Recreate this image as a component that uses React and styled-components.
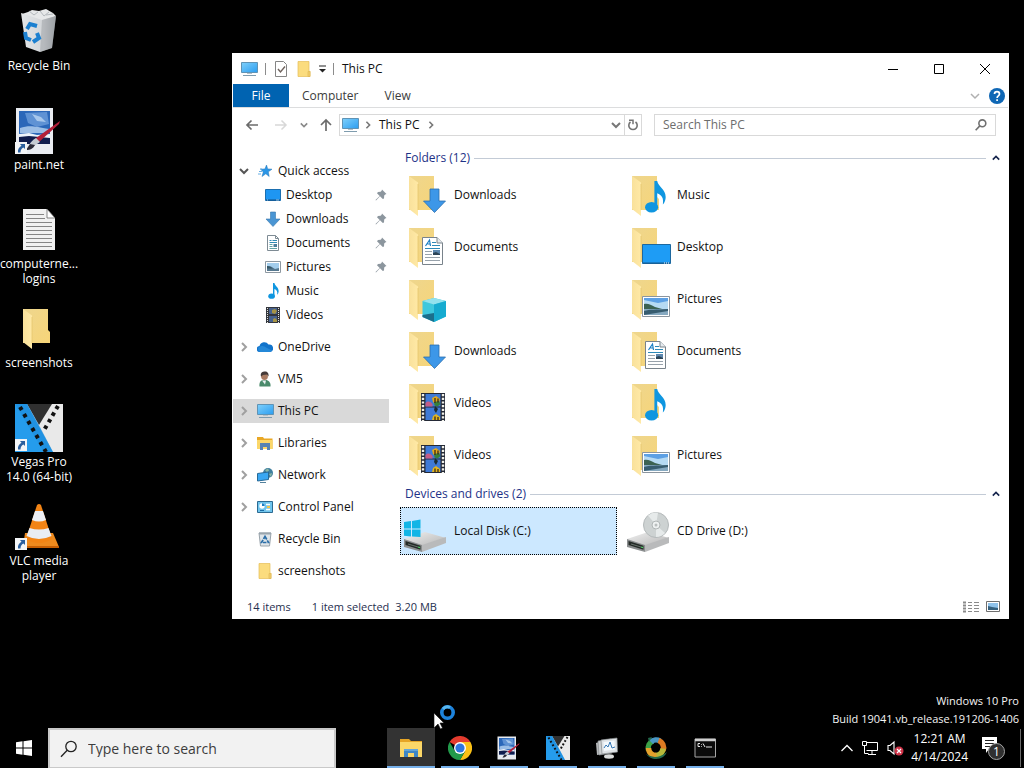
import React from "react";
import styled, { createGlobalStyle } from "styled-components";

const GlobalStyle = createGlobalStyle`
  * { box-sizing: border-box; }
  body {
    margin: 0;
    background: #000;
    font-family: "Open Sans", "Noto Sans", sans-serif;
    font-size: 12px;
    line-height: 16px;
    color: #111;
  }
  button, input { font: inherit; color: inherit; border: 0; padding: 0; margin: 0; background: none; }
  svg { display: block; flex: none; }
`;

/* ---------- desktop ---------- */

const Screen = styled.div`
  position: relative;
  min-height: 100vh;
  display: flex;
  flex-direction: column;
  overflow: hidden;
`;

const DesktopArea = styled.main`
  flex: 1;
  display: flex;
  align-items: flex-start;
`;

const Shortcuts = styled.nav`
  width: 78px;
  flex: none;
  display: flex;
  flex-direction: column;
`;

const Shortcut = styled.button`
  height: 99px;
  padding-top: 8px;
  display: flex;
  flex-direction: column;
  align-items: center;
  gap: 2px;
  color: #fff;
  line-height: 15px;
  text-align: center;
`;

const ShortcutLabel = styled.span`
  white-space: pre-line;
`;

const Watermark = styled.div`
  padding: 0 5px 0 0;
  font-size: 11px;
  line-height: 18px;
  color: #f4f4f4;
  text-align: right;
`;

const Pointer = styled.svg`
  position: absolute;
  left: 42.3%;
  bottom: 36px;
`;

/* ---------- window ---------- */

const Window = styled.section`
  flex: 1;
  min-width: 0;
  margin: 53px 15px 0 154px;
  padding: 0 1px;
  background: #fff;
`;

const TitleBar = styled.header`
  height: 31px;
  display: flex;
  align-items: center;
  padding-left: 8px;
`;

const QuickTools = styled.div`
  display: flex;
  align-items: center;
  gap: 7px;
`;

const Separator = styled.span`
  width: 1px;
  height: 12px;
  background: #8c8c8c;
`;

const Title = styled.h1`
  flex: 1;
  margin: 0 0 0 8px;
  font-size: 12px;
  font-weight: 400;
`;

const CaptionButton = styled.button`
  width: 46px;
  height: 31px;
  display: grid;
  place-items: center;
`;

const Ribbon = styled.div`
  height: 24px;
  display: flex;
  align-items: center;
  border-bottom: 1px solid #dcddde;
`;

const Tab = styled.button`
  height: 23px;
  padding: 0 13px;
  color: #3c3c3c;
`;

const FileTab = styled(Tab)`
  width: 56px;
  background: #0063b1;
  color: #fff;
`;

const RibbonEnd = styled.div`
  margin-left: auto;
  padding-right: 3px;
  display: flex;
  align-items: center;
  gap: 9px;
`;

const NavBar = styled.div`
  height: 34px;
  display: flex;
  align-items: center;
  padding: 0 12px 0 11px;
`;

const NavButtons = styled.div`
  display: flex;
  align-items: center;
  gap: 12px;
  padding-right: 7px;
`;

const IconButton = styled.button`
  display: grid;
  place-items: center;
`;

const AddressBar = styled.div`
  flex: 299 1 0;
  height: 22px;
  display: flex;
  align-items: center;
  gap: 5px;
  padding-left: 2px;
  border: 1px solid #d9d9d9;
`;

const Crumb = styled.button`
  padding: 0 2px;
`;

const AddressEnd = styled.div`
  height: 20px;
  margin-left: auto;
  display: flex;
  align-items: center;
`;

const Refresh = styled(IconButton)`
  width: 17px;
  height: 20px;
  margin-left: 3px;
  border-left: 1px solid #d9d9d9;
`;

const SearchBox = styled.label`
  flex: 324 1 0;
  height: 22px;
  margin-left: 12px;
  padding: 0 8px;
  display: flex;
  align-items: center;
  border: 1px solid #d9d9d9;
  input { flex: 1; min-width: 0; outline: 0; }
  input::placeholder { color: #6d6d6d; opacity: 1; }
`;

const Body = styled.div`
  display: flex;
  align-items: flex-start;
  padding-bottom: 12px;
`;

/* ---------- navigation tree ---------- */

const Tree = styled.nav`
  width: 156px;
  flex: none;
  padding-top: 17px;
  display: flex;
  flex-direction: column;
  gap: 8px;
`;

const TreeRow = styled.button`
  width: 100%;
  height: 24px;
  display: flex;
  align-items: center;
  padding: 0 2px 0 ${(p) => (p.$child ? 32 : 6)}px;
  background: ${(p) => (p.$selected ? "#d9d9d9" : "transparent")};
`;

const Twisty = styled.span`
  width: 18px;
`;

const TreeLabel = styled.span`
  flex: 1;
  margin-left: 5px;
  text-align: left;
`;

/* ---------- content ---------- */

const Content = styled.div`
  flex: 1;
  min-width: 0;
  padding: 6px 8px 0 11px;
  display: flex;
  flex-direction: column;
  gap: 5px;
`;

const GroupHead = styled.h2`
  height: 20px;
  margin: 0 0 3px;
  padding-left: 5px;
  display: flex;
  align-items: center;
  gap: 4px;
  font-size: 12px;
  font-weight: 400;
  color: #1e3287;
`;

const Rule = styled.span`
  flex: 1;
  height: 1px;
  margin-right: 2px;
  background: #c3cbd6;
`;

const Tiles = styled.div`
  display: grid;
  grid-template-columns: repeat(auto-fill, 217px);
  gap: 4px 6px;
`;

const Tile = styled.button`
  height: 48px;
  display: flex;
  align-items: center;
  gap: 5px;
  text-align: left;
  border: 1px ${(p) => (p.$selected ? "dotted #000" : "solid transparent")};
  background: ${(p) => (p.$selected ? "#cce8ff" : "transparent")};
  svg { margin-top: 2px; }
`;

const StatusBar = styled.footer`
  height: 24px;
  display: flex;
  align-items: center;
  padding: 0 8px 0 14px;
  font-size: 11px;
  color: #1f2f4f;
`;

const StatusText = styled.span`
  margin-right: ${(p) => p.$gap}px;
`;

const ViewSwitch = styled.div`
  margin-left: auto;
  display: flex;
  gap: 7px;
`;

/* ---------- taskbar ---------- */

const Taskbar = styled.footer`
  height: 40px;
  display: flex;
  align-items: stretch;
  color: #fff;
`;

const StartButton = styled(IconButton)`
  width: 48px;
`;

const TaskSearch = styled.label`
  width: 288px;
  padding: 0 10px;
  display: flex;
  align-items: center;
  gap: 10px;
  border: 2px solid #c9c9c9;
  border-bottom-width: 1px;
  background: #f2f2f2;
  color: #333;
  font-size: 14px;
  input { flex: 1; min-width: 0; outline: 0; }
  input::placeholder { color: #3d3d3d; opacity: 1; }
`;

const Apps = styled.div`
  margin-left: 51px;
  display: flex;
  gap: 1px;
`;

const AppButton = styled.button`
  width: 48px;
  display: flex;
  flex-direction: column;
  align-items: center;
  justify-content: space-between;
  padding-top: 8px;
  background: ${(p) => (p.$active ? "#333" : "transparent")};
`;

const Underline = styled.span`
  width: ${(p) => (p.$active ? 48 : 38)}px;
  height: 2px;
  background: #76b0ea;
`;

const Tray = styled.div`
  margin-left: auto;
  display: flex;
  align-items: center;
`;

const TrayIcons = styled.div`
  display: flex;
  align-items: center;
  gap: 8px;
`;

const Clock = styled.time`
  margin: 0 13px 0 7px;
  line-height: 18px;
  text-align: center;
`;

const ShowDesktop = styled.button`
  width: 4px;
  height: 38px;
  margin-left: 15px;
  border-left: 1px solid #6a6a6a;
`;

/* ---------- glyphs ---------- */

const Chevron = ({ dir = "right", color = "#888", size = 10, w = 1.5 }) => {
  const d = {
    right: "M3 1l4 4-4 4",
    down: "M1 3l4 4 4-4",
    up: "M1 7l4-4 4 4",
  }[dir];
  return (
    <svg width={size} height={size} viewBox="0 0 10 10">
      <path d={d} fill="none" stroke={color} strokeWidth={w} />
    </svg>
  );
};

const MonitorIcon = () => (
  <svg width="17" height="16" viewBox="0 0 17 16">
    <defs>
      <linearGradient id="scr" x1="0" y1="0" x2="1" y2="1">
        <stop offset="0" stopColor="#7fd0fb" />
        <stop offset="1" stopColor="#2b9df0" />
      </linearGradient>
    </defs>
    <path d="M.5 1.500h16v10H.5z" fill="url(#scr)" stroke="#5f93b5" />
    <path d="M6 12h5v1H6z" fill="#b4c0c8" />
    <path d="M2 14.500h13" stroke="#7f9cae" />
  </svg>
);

const StarIcon = () => (
  <svg width="16" height="16" viewBox="0 0 16 16">
    <path d="M9.500 2l1.200 3.900 4.300.3-3.700 2.600.9 4.700-3.400-2.700-3.800 2.700 1.300-4.600L3.500 6.200l4.400-.3z" fill="#2b96e6" stroke="#2074b8" strokeWidth=".5" />
    <path d="M2 8.500h3M1 11h3M3 6h2" stroke="#67aee4" />
  </svg>
);

const DesktopIcon = ({ w = 16, h = 16 }) => (
  <svg width={w} height={h} viewBox="0 0 16 16">
    <path d="M.5 2.500h15v11H.5z" fill="#1e96f2" stroke="#1b6fb0" />
    <path d="M1 13h14" stroke="#0e4f85" />
    <path d="M2 13h1M11 13h3" stroke="#d6ecff" strokeWidth=".7" />
  </svg>
);

const DownIcon = ({ w = 16, h = 16 }) => (
  <svg width={w} height={h} viewBox="0 0 16 16">
    <path d="M5.500 1h5v7h4.500L8 15.500 1 8h4.500z" fill="#4a95d3" stroke="#3577ad" strokeWidth=".6" />
  </svg>
);

const DocShape = () => (
  <g>
    <path d="M.5.5H15l5.500 5.500v21.500H.5z" fill="#fff" stroke="#79838b" />
    <path d="M15 .5V6h5.500" fill="#e6ebef" stroke="#79838b" />
    <path d="M3.500 9l4-6 1 6M5.500 7h3" fill="none" stroke="#1b7fc4" strokeWidth="1.200" />
    <path d="M10 5.500h4M10 8.500h8M3 11.500h15" stroke="#2d89b8" />
    <path d="M3 14.500h7M3 17.500h7M3 20.500h15M3 23.500h15" stroke="#98a2ab" />
    <path d="M11 13h7v5h-7z" fill="#5c86ad" />
    <path d="M11 18v-2l3-1 4 2v1z" fill="#2c4456" />
  </g>
);

const DocIcon = () => (
  <svg width="16" height="16" viewBox="0 0 16 16">
    <path d="M2.500.5h8l3 3v12h-11z" fill="#fff" stroke="#7e8b94" />
    <path d="M10.500.5v3h3" fill="none" stroke="#7e8b94" />
    <path d="M4.500 5.500h2M7.500 5.500h4.500M4.500 7.500h7.500" stroke="#2f8bb5" />
    <path d="M4.500 9.500h3M4.500 11.500h3M4.500 13.500h7.500" stroke="#5fa3a6" />
    <path d="M8.500 9h3.500v3H8.500z" fill="#4c7f9c" />
  </svg>
);

const PictureShape = () => (
  <g>
    <path d="M.5.5h27v20H.5z" fill="#fff" stroke="#8b959e" />
    <path d="M2 2h24v17H2z" fill="#b6daf3" />
    <path d="M2 2h24v3l-10 2L2 4z" fill="#5da0e4" />
    <path d="M2 8c4-1 7 1 11 3l9 2.500H2z" fill="#3c6252" />
    <path d="M2 13h24v6H2z" fill="#86a9c0" />
    <path d="M2 15c6-2 11-1 24-2v2L2 19z" fill="#385d70" />
  </g>
);

const PictureIcon = () => (
  <svg width="16" height="14" viewBox="0 0 16 14">
    <path d="M.5 1.500h15v11H.5z" fill="#fff" stroke="#8d98a1" />
    <path d="M2 3h12v8H2z" fill="#a3cdec" />
    <path d="M2 6l4 .5 4 2.500 4-1v3H2z" fill="#56788f" />
    <path d="M2 6l3 .5 3 2H2z" fill="#365868" />
  </svg>
);

const NoteShape = () => (
  <g fill="#0f96e0">
    <ellipse cx="7" cy="29" rx="7" ry="5.500" />
    <path d="M10 1h3c1 6 9 9 9 17 0 3-1 6-3 8 1-7-1-10-6-12v15h-3z" />
  </g>
);

const NoteIcon = () => (
  <svg width="16" height="18" viewBox="-7 0 34 36">
    <NoteShape />
  </svg>
);

const FilmShape = () => (
  <g>
    <path d="M0 0h24v28H0z" fill="#242936" />
    <path d="M2 1v27M22 1v27" stroke="#f1f1ea" strokeWidth="2.400" strokeDasharray="2.200 1.500" />
    <path d="M4.500 1h15v12.500h-15zM4.500 14.500h15V27h-15z" fill="#3f7ad6" />
    <path d="M4.500 10c3-3 5-1 7 1v2.500h-7z" fill="#c45d87" />
    <path d="M11 5l4-2 4 3-1 4-3 2-3-3z" fill="#e2a91c" />
    <path d="M13 9l5-1 1.500 3-3 2.500-3-1z" fill="#37803a" />
    <path d="M14 13l3 3-2 4-2-3z" fill="#1c2c32" />
    <path d="M11 27l1-4 3-2 4 3v3z" fill="#e2b51e" />
    <path d="M14 5v5M17 5.500v4M14 23.500v3.500M17 24v3" stroke="#3a2a18" strokeWidth="1.300" />
  </g>
);

const FilmIcon = () => (
  <svg width="14" height="16" viewBox="0 0 14 16">
    <path d="M0 0h14v16H0z" fill="#33363d" />
    <path d="M1.500 1v15M12.500 1v15" stroke="#e4e4dc" strokeDasharray="1 1" />
    <path d="M3 1h8v6H3zM3 9h8v6H3z" fill="#47628f" />
    <path d="M6 3l3-1 2 2-2 3-3-1z" fill="#a79443" />
    <path d="M7 12l2-1 2 2v2H7z" fill="#a79443" />
  </svg>
);

const CloudIcon = () => (
  <svg width="16" height="16" viewBox="0 0 16 16">
    <path d="M3 13a3 3 0 0 1-.5-6A5 5 0 0 1 11.500 5.500 3.700 3.700 0 0 1 13 13z" fill="#1173cb" />
    <path d="M2 8c3-2 5-1 8 1l5 2.500A3 3 0 0 1 13 13H3a3 3 0 0 1-1-5z" fill="#2488d8" />
  </svg>
);

const UserIcon = () => (
  <svg width="16" height="16" viewBox="0 0 16 16">
    <path d="M2.500 15.500c-.5-4 1-6.500 4-6.500h2c3 0 5.500 2.500 5 6.500z" fill="#4a8a6b" />
    <path d="M5 9.500l3 4 1-4z" fill="#e9eef0" />
    <circle cx="7.500" cy="5.500" r="3.400" fill="#a97b62" />
    <path d="M4 5.500C3 1.500 5.500.5 8 .5s4 2 3.500 5L10 3.500 6 4z" fill="#443a38" />
  </svg>
);

const LibraryIcon = () => (
  <svg width="16" height="16" viewBox="0 0 16 16">
    <path d="M0 2h6l1 1.500h8.500V14H0z" fill="#e9a825" />
    <path d="M0 5h15.500v9H0z" fill="#fbd769" />
    <path d="M3 8h10v7h-3v-3H6v3H3z" fill="#5583b4" />
  </svg>
);

const NetworkIcon = () => (
  <svg width="16" height="16" viewBox="0 0 16 16">
    <circle cx="11" cy="6" r="5" fill="#3f7f9f" />
    <path d="M8 3l3-1.500 1 2-2 2zM12 7l3-1-1 4z" fill="#8cb7a6" />
    <path d="M.5 6.500l11-1.500v7.500l-11 1.500z" fill="#39a7f2" stroke="#276a97" />
    <path d="M3 15.500h6" stroke="#54819c" />
  </svg>
);

const ControlIcon = () => (
  <svg width="16" height="16" viewBox="0 0 16 16">
    <path d="M.5 2.500h15v11H.5z" fill="#6fc5ee" stroke="#2c6b92" />
    <circle cx="5" cy="7" r="2.700" fill="#fff" />
    <path d="M5 7V4.300A2.700 2.700 0 0 1 7.700 7z" fill="#1b7fc4" />
    <path d="M9 5.500h4M9 10.500h4" stroke="#fff" strokeWidth="1.500" />
    <path d="M10 7h3v2h-3z" fill="#f0c64a" />
    <path d="M3 11.500h4" stroke="#186ba5" />
  </svg>
);

const MiniBin = () => (
  <svg width="16" height="16" viewBox="0 0 16 16">
    <path d="M2 2h12l-1.500 13h-9z" fill="#dfe5e9" stroke="#98a2aa" />
    <path d="M2 2.500h12" stroke="#9aa5ad" strokeWidth="2" />
    <path d="M8 5.500l3.500 6h-7z" fill="none" stroke="#2b6ea8" strokeWidth="1.700" strokeDasharray="3.500 1" />
  </svg>
);

const MiniFolder = () => (
  <svg width="16" height="16" viewBox="0 0 16 16">
    <path d="M2 .5h11v9l1 1v5H2z" fill="#fbdc7e" stroke="#e5bd57" strokeWidth=".7" />
    <path d="M12 10.500h2v5h-2z" fill="#f3cf6c" stroke="#dfb756" strokeWidth=".7" />
  </svg>
);

const PinIcon = () => (
  <svg width="12" height="12" viewBox="0 0 12 12">
    <path d="M7 .5L11.500 5l-1.300.4-1 1L9 9.500 7.800 10 5 7.300 1 11.500.5 11l4.200-4L2 4.200 3 3l2.600-.2 1-1z" fill="#8c969e" />
  </svg>
);

const FolderShape = () => (
  <g>
    <defs>
      <linearGradient id="fback" x1="0" y1="0" x2="1" y2="1">
        <stop offset="0" stopColor="#eed68e" />
        <stop offset="1" stopColor="#f7d578" />
      </linearGradient>
      <linearGradient id="ffront" x1="0" y1="0" x2="1" y2="0">
        <stop offset="0" stopColor="#f9e19b" />
        <stop offset="1" stopColor="#ffe9a6" />
      </linearGradient>
    </defs>
    <path d="M8 4h25v21l2 2v11H8z" fill="url(#fback)" />
    <path d="M8 4l9 6.500V44l-9-7z" fill="url(#ffront)" />
    <path d="M17 12v26" stroke="#e6c56c" strokeWidth=".8" />
  </g>
);

const overlays = {
  down: <path d="M29 17h9v12h6.500L33.500 40.500 22.500 29H29z" fill="#3d97e8" stroke="#2b6fae" strokeWidth=".8" />,
  doc: <g transform="translate(21 13)"><DocShape /></g>,
  cube: (
    <g>
      <path d="M21.500 25L33 22l12 3v15.500L33 46l-11.500-5z" fill="#3fc8dd" />
      <path d="M21.500 25L33 22l12 3-12 3.500z" fill="#93e2ee" />
      <path d="M33 28.500L45 25v15.500L33 46z" fill="#16abd0" />
      <path d="M21.500 39l11.500-2v9l-11.500-5z" fill="#1c6f8c" />
    </g>
  ),
  film: <g transform="translate(20 13)"><FilmShape /></g>,
  note: <g transform="translate(21 8) scale(.94)"><NoteShape /></g>,
  desktop: (
    <g>
      <path d="M18.500 20.500h28v19h-28z" fill="#1e9cf5" stroke="#1d689f" />
      <path d="M19 39h27" stroke="#145a90" />
      <path d="M40 39h1M42 39h1M44 39h1" stroke="#fff" />
    </g>
  ),
  picture: <g transform="translate(18 20)"><PictureShape /></g>,
};

const FolderIcon = ({ kind, size = 48 }) => (
  <svg width={size} height={size} viewBox="0 0 48 48">
    <FolderShape />
    {overlays[kind]}
  </svg>
);

const DriveShape = () => (
  <g>
    <defs>
      <linearGradient id="drv" x1="0" y1="0" x2="1" y2="1">
        <stop offset="0" stopColor="#f1f1f1" />
        <stop offset="1" stopColor="#b2b2b2" />
      </linearGradient>
    </defs>
    <path d="M3 31l21-7 21 6-24 9z" fill="url(#drv)" />
    <path d="M3 31l18 6v7L3 39z" fill="#8b8e8f" />
    <path d="M4.500 33l15 4.700v4L4.500 37z" fill="#242a27" />
    <path d="M21 37l24-8v6l-24 9z" fill="#b9babb" />
    <path d="M7 36l10 3" stroke="#66716b" />
    <path d="M17 39l2 .6" stroke="#56d46b" strokeWidth="1.300" />
  </g>
);

const DiskIcon = () => (
  <svg width="48" height="48" viewBox="0 0 48 48">
    <DriveShape />
    <path d="M3 14l7-1v7.500H3zM11 12.900l8.500-1.400v9H11zM3 21.500h7v7l-7-.8zM11 21.500h8.500V29L11 28.500z" fill="#12b5e6" />
  </svg>
);

const DiscIcon = () => (
  <svg width="48" height="48" viewBox="0 0 48 48">
    <DriveShape />
    <circle cx="32" cy="17" r="12.500" fill="#cdd2d2" stroke="#b4b9ba" />
    <path d="M32 17L24 7.500A12.500 12.500 0 0 1 34 4.700zM32 17l9 8a12 12 0 0 1-9 4z" fill="#e6eaea" />
    <circle cx="32" cy="17" r="4" fill="#eef1f1" stroke="#b0b6b6" />
    <circle cx="32" cy="17" r="1.500" fill="#b9bebe" />
  </svg>
);

const LinkBadge = () => (
  <g transform="translate(0 35)">
    <path d="M0 0h12v12H0z" fill="#f3f5f7" />
    <path d="M5 2h5v5L8.500 5.500C6.500 6.500 5.500 8 5.500 10.500H3C2.500 7.500 4 5 6.500 3.800z" fill="#2a5f9e" />
  </g>
);

const BinIcon = () => (
  <svg width="48" height="48" viewBox="0 0 48 48">
    <defs>
      <linearGradient id="bin" x1="0" y1="0" x2="1" y2="0">
        <stop offset="0" stopColor="#e3e6e8" />
        <stop offset=".65" stopColor="#d3d6d9" />
        <stop offset="1" stopColor="#a0a4a8" />
      </linearGradient>
    </defs>
    <path d="M7 6l6-2 4-2 7 1 7-2 7 4 3 3-11 6L9 10z" fill="#e6e8e9" />
    <path d="M6 5l21 7 14-4-4 32-12 4-14-5z" fill="url(#bin)" />
    <path d="M27 12l14-4-4 32-12 4z" fill="#9a9ea2" opacity=".5" />
    <path d="M14 3l5 4 4-3M25 3l4 5 5-4M31 7l7-1" fill="none" stroke="#b3b8bc" />
    <g fill="none" stroke="#1c80d0" strokeWidth="4">
      <path d="M12 21l3-5 7 2" />
      <path d="M10 24l1 6 5 2" />
      <path d="M18 34l6-4-2-5" />
    </g>
  </svg>
);

const PaintShape = () => (
  <g>
    <path d="M1 1h37v46H1z" fill="#e9ecf1" />
    <path d="M4 4h31v33H4z" fill="#2b67b9" />
    <path d="M10 6l22-1 2 12-12 3-9-4z" fill="#76a5df" opacity=".7" />
    <path d="M17 7l9 3 5 5-9-1zM5 21c9-3 14-2 29 1v4H5z" fill="#b9d4f1" opacity=".8" />
    <path d="M4 27l10-1 8 2 13-1v5H4z" fill="#eef4fb" />
    <path d="M4 30l10-1 21 2v6H4z" fill="#101d4d" />
    <path d="M45 14L21 31l-3 5 6-1 20-18z" fill="#b21f39" />
    <path d="M21 31l4 4-6 4c-2 3-5 4-8 4 3-3 3-8 10-12z" fill="#c5cbd2" />
    <path d="M15 37l5 1c-2 4-5 5-9 5z" fill="#2c2b38" />
  </g>
);

const PaintIcon = () => (
  <svg width="48" height="48" viewBox="0 0 48 48">
    <PaintShape />
    <LinkBadge />
  </svg>
);

const TextIcon = () => (
  <svg width="48" height="48" viewBox="0 0 48 48">
    <path d="M8 3h24l8 9v32H8z" fill="#f1f1f1" />
    <path d="M32 3v9h8z" fill="#fff" stroke="#555" strokeWidth=".7" />
    <path d="M11 8.500h18M11 12.500h19M11 16.500h26M11 20.500h26M11 24.500h26M11 28.500h26M11 32.500h26M11 36.500h26M11 40.500h26" stroke="#858585" />
  </svg>
);

const VegasShape = () => (
  <g>
    <path d="M0 0h48v48H0z" fill="#e9e9e9" />
    <path d="M12 0h25L24 21z" fill="#303030" />
    <path d="M0 0h12l26 48H0z" fill="#259cec" />
    <path d="M12 0l12 21 14 27h-9L0 0z" fill="#1c88d8" opacity=".5" />
    <path d="M5 3l26 45" stroke="#111" strokeWidth="4" strokeDasharray="3.600 4.500" />
    <path d="M43 2L28 28" stroke="#111" strokeWidth="4" strokeDasharray="3.600 4" />
  </g>
);

const VegasIcon = () => (
  <svg width="48" height="48" viewBox="0 0 48 48">
    <VegasShape />
    <LinkBadge />
  </svg>
);

const VlcIcon = () => (
  <svg width="48" height="48" viewBox="0 0 48 48">
    <path d="M10 30h28l6 14H8z" fill="#ee8a1e" />
    <path d="M8 43h36v2H8z" fill="#c65f04" />
    <path d="M22 2q2-2 4 0l11 34q-13 8-26 0z" fill="#f28415" />
    <path d="M20 8h8l3 9q-7 3-14 0z" fill="#edf0f5" />
    <path d="M14.500 25q9.500 3 19 0l3 8q-12.500 6-25 0z" fill="#e9edf4" />
    <LinkBadge />
  </svg>
);

const WinLogo = () => (
  <svg width="16" height="16" viewBox="0 0 16 16">
    <path d="M0 2.200L6.500 1.300v6.200H0zM7.500 1.200L16 0v7.500H7.500zM0 8.500h6.500v6.200L0 13.800zM7.500 8.500H16V16l-8.500-1.200z" fill="#fff" />
  </svg>
);

const Glass = ({ size = 18, color = "#222", w = 1.3 }) => (
  <svg width={size} height={size} viewBox="0 0 18 18">
    <circle cx="11" cy="6.500" r="5.200" fill="none" stroke={color} strokeWidth={w} />
    <path d="M7.200 10.300L1 16.800" stroke={color} strokeWidth={w} />
  </svg>
);

const App24 = ({ children, box = "0 0 24 24" }) => (
  <svg width="24" height="24" viewBox={box}>
    {children}
  </svg>
);

const appIcons = {
  Explorer: (
    <App24>
      <path d="M1 3h9l2 2h11v16H1z" fill="#e6a526" />
      <path d="M1 6h22v15H1z" fill="#fbd768" />
      <path d="M5 13h14v8h-4v-4H9v4H5z" fill="#3f87c6" />
      <path d="M5 13h14v2H5z" fill="#63a5d8" />
    </App24>
  ),
  Chrome: (
    <App24>
      <path d="M12 12L1.600 6A12 12 0 0 1 22.400 6z" fill="#e33b2e" />
      <path d="M12 6h10.400A12 12 0 0 1 12 24l5.200-9z" fill="#fbc116" />
      <path d="M17.200 15L12 24A12 12 0 0 1 1.600 6l5.200 9z" fill="#229a4b" />
      <circle cx="12" cy="12" r="6" fill="#fff" />
      <circle cx="12" cy="12" r="4.600" fill="#2f76e0" />
    </App24>
  ),
  "paint.net": <App24 box="0 0 48 48"><PaintShape /></App24>,
  Vegas: <App24 box="0 0 48 48"><VegasShape /></App24>,
  Monitor: (
    <App24>
      <path d="M1 7l12-4 1 14-12 2z" fill="#b5b8ba" />
      <path d="M3 5l13-2 1 14-13 2z" fill="#cdd0d2" stroke="#85898d" strokeWidth=".7" />
      <path d="M6 4l16-2 .5 14L7 18z" fill="#dfe3e6" stroke="#85898d" strokeWidth=".7" />
      <path d="M8.500 6l11-1.500.5 9-11 1.500z" fill="#f3f8fc" />
      <path d="M9 12l2-3 2 2 2-5 2 6 3-1" fill="none" stroke="#3577b4" />
      <ellipse cx="14" cy="20.500" rx="5" ry="2.200" fill="#dcdede" />
    </App24>
  ),
  Swirl: (
    <App24>
      <g fill="none" strokeWidth="5.500">
        <path d="M4.500 14A7.500 7.500 0 0 1 9 5" stroke="#3da148" />
        <path d="M7 6a7.500 7.500 0 0 1 9-1" stroke="#4a97c4" />
        <path d="M14.500 4.500a7.500 7.500 0 0 1 4.500 10" stroke="#dd7a22" />
        <path d="M19 12.500a7.500 7.500 0 0 1-8.500 7" stroke="#b7b83a" />
        <path d="M12.500 19.500A7.500 7.500 0 0 1 4.500 12" stroke="#e3a12c" />
      </g>
      <path d="M4 2l4-1-3 5zM2 18q10 7 21-2-3 7-11 7-6 0-10-5z" fill="#23694b" />
    </App24>
  ),
  Terminal: (
    <App24>
      <path d="M2 3h20.500v18H2z" fill="#0b0b0b" stroke="#a6a6a6" />
      <path d="M2 4h20.500" stroke="#cfcfcf" strokeWidth="2.500" />
      <path d="M7 7.500H5v3h2M8.500 8v.7M8.500 10v.7M10 7.500l2 3.500M13 11h6" fill="none" stroke="#e5e5e5" />
    </App24>
  ),
};

/* ---------- data ---------- */

const shortcuts = [
  ["Recycle Bin", <BinIcon />],
  ["paint.net", <PaintIcon />],
  ["computerne...\nlogins", <TextIcon />],
  ["screenshots", <FolderIcon />],
  ["Vegas Pro\n14.0 (64-bit)", <VegasIcon />],
  ["VLC media\nplayer", <VlcIcon />],
];

const quick = [
  ["Desktop", <DesktopIcon />, true],
  ["Downloads", <DownIcon />, true],
  ["Documents", <DocIcon />, true],
  ["Pictures", <PictureIcon />, true],
  ["Music", <NoteIcon />],
  ["Videos", <FilmIcon />],
];

const places = [
  ["OneDrive", <CloudIcon />, true],
  ["VM5", <UserIcon />, true],
  ["This PC", <MonitorIcon />, true],
  ["Libraries", <LibraryIcon />, true],
  ["Network", <NetworkIcon />, true],
  ["Control Panel", <ControlIcon />, true],
  ["Recycle Bin", <MiniBin />],
  ["screenshots", <MiniFolder />],
];

const folders = [
  ["Downloads", "down"],
  ["Music", "note"],
  ["Documents", "doc"],
  ["Desktop", "desktop"],
  ["", "cube"],
  ["Pictures", "picture"],
  ["Downloads", "down"],
  ["Documents", "doc"],
  ["Videos", "film"],
  ["", "note"],
  ["Videos", "film"],
  ["Pictures", "picture"],
];

const IconSlot = styled.span`
  width: 16px;
  display: grid;
  place-items: center;
`;

const Group = ({ title, children }) => (
  <section>
    <GroupHead>
      {title}
      <Rule />
      <Chevron dir="up" color="#16254d" w={2} size={8} />
    </GroupHead>
    <Tiles>{children}</Tiles>
  </section>
);

const Explorer = () => (
  <Window>
    <TitleBar>
      <QuickTools>
        <MonitorIcon />
        <Separator />
        <IconButton aria-label="Properties">
          <svg width="16" height="16" viewBox="0 0 16 16">
            <path d="M2.500.5h8l3 3v12h-11z" fill="#fff" stroke="#858585" />
            <path d="M5 8l2.500 3L12 5.500" fill="none" stroke="#6e625c" strokeWidth="1.400" />
          </svg>
        </IconButton>
        <MiniFolder />
        <svg width="7" height="8" viewBox="0 0 7 8">
          <path d="M0 1h7" stroke="#222" />
          <path d="M0 4h7L3.500 7.500z" fill="#222" />
        </svg>
        <Separator />
      </QuickTools>
      <Title>This PC</Title>
      <CaptionButton aria-label="Minimize">
        <svg width="10" height="10"><path d="M0 5.500h10" stroke="#000" /></svg>
      </CaptionButton>
      <CaptionButton aria-label="Maximize">
        <svg width="10" height="10"><path d="M.5.5h9v9h-9z" fill="none" stroke="#000" /></svg>
      </CaptionButton>
      <CaptionButton aria-label="Close">
        <svg width="10" height="10"><path d="M0 0l10 10M10 0L0 10" stroke="#000" /></svg>
      </CaptionButton>
    </TitleBar>

    <Ribbon>
      <FileTab>File</FileTab>
      <Tab>Computer</Tab>
      <Tab>View</Tab>
      <RibbonEnd>
        <Chevron dir="down" color="#b0b0b0" />
        <IconButton aria-label="Help">
          <svg width="16" height="16" viewBox="0 0 16 16">
            <circle cx="8" cy="8" r="8" fill="#0f67b5" />
            <path d="M5.500 6c0-3.200 5-3.200 5 0 0 2-2.400 1.800-2.400 4M8.100 11.200v1.700" fill="none" stroke="#fff" strokeWidth="1.700" />
          </svg>
        </IconButton>
      </RibbonEnd>
    </Ribbon>

    <NavBar>
      <NavButtons>
        <IconButton aria-label="Back">
          <svg width="16" height="12"><path d="M14 6H3M7.500 1.500L3 6l4.500 4.500" fill="none" stroke="#6b6b6b" strokeWidth="1.700" /></svg>
        </IconButton>
        <IconButton aria-label="Forward">
          <svg width="16" height="12"><path d="M3 6h11M9.500 1.500L14 6l-4.500 4.500" fill="none" stroke="#d8d8d8" strokeWidth="1.500" /></svg>
        </IconButton>
        <Chevron dir="down" color="#8a8a8a" size={8} w={2} />
        <IconButton aria-label="Up">
          <svg width="12" height="14"><path d="M6 13V2M1 7l5-5 5 5" fill="none" stroke="#6b6b6b" strokeWidth="1.700" /></svg>
        </IconButton>
      </NavButtons>
      <AddressBar>
        <MonitorIcon />
        <Chevron size={8} w={2} color="#777" />
        <Crumb>This PC</Crumb>
        <Chevron size={8} w={2} color="#777" />
        <AddressEnd>
          <Chevron dir="down" w={2} color="#777" />
          <Refresh aria-label="Refresh">
            <svg width="12" height="12" viewBox="0 0 12 12">
              <path d="M8.500 3a4.200 4.200 0 1 1-5 0" fill="none" stroke="#737373" strokeWidth="1.600" />
              <path d="M2 1.200h4v4" fill="none" stroke="#737373" strokeWidth="1.500" />
            </svg>
          </Refresh>
        </AddressEnd>
      </AddressBar>
      <SearchBox>
        <input type="text" placeholder="Search This PC" />
        <Glass size={12} color="#707070" w={2.4} />
      </SearchBox>
    </NavBar>

    <Body>
      <Tree>
        <div>
          <TreeRow>
            <Twisty><Chevron dir="down" color="#555" w={2} /></Twisty>
            <IconSlot><StarIcon /></IconSlot>
            <TreeLabel>Quick access</TreeLabel>
          </TreeRow>
          {quick.map(([name, icon, pinned]) => (
            <TreeRow key={name} $child>
              <IconSlot>{icon}</IconSlot>
              <TreeLabel>{name}</TreeLabel>
              {pinned && <PinIcon />}
            </TreeRow>
          ))}
        </div>
        {places.map(([name, icon, expandable]) => (
          <TreeRow key={name} $selected={name === "This PC"}>
            <Twisty>{expandable && <Chevron color="#a0a0a0" w={2} />}</Twisty>
            <IconSlot>{icon}</IconSlot>
            <TreeLabel>{name}</TreeLabel>
          </TreeRow>
        ))}
      </Tree>
      <Content>
        <Group title="Folders (12)">
          {folders.map(([name, kind], i) => (
            <Tile key={i}>
              <FolderIcon kind={kind} />
              {name}
            </Tile>
          ))}
        </Group>
        <Group title="Devices and drives (2)">
          <Tile $selected><DiskIcon />Local Disk (C:)</Tile>
          <Tile><DiscIcon />CD Drive (D:)</Tile>
        </Group>
      </Content>
    </Body>

    <StatusBar>
      <StatusText $gap={21}>14 items</StatusText>
      <StatusText $gap={6}>1 item selected</StatusText>
      <StatusText $gap={0}>3.20 MB</StatusText>
      <ViewSwitch>
        <IconButton aria-label="Details">
          <svg width="16" height="12">
            <path d="M0 1.500h3M0 4.500h3M0 7.500h3M0 10.500h3" stroke="#8a8a8a" strokeWidth="2" />
            <path d="M5 1.500h4M5 4.500h4M5 7.500h4M5 10.500h4M11 1.500h5M11 4.500h5M11 7.500h5M11 10.500h5" stroke="#8a8a8a" />
          </svg>
        </IconButton>
        <IconButton aria-label="Large icons">
          <svg width="14" height="12">
            <path d="M.5.5h13v10H.5z" fill="#fff" stroke="#6f6f6f" />
            <path d="M2 2h10v7H2z" fill="#8fc2ea" />
            <path d="M2 5l4 1 6 1v2H2z" fill="#35607d" />
          </svg>
        </IconButton>
      </ViewSwitch>
    </StatusBar>
  </Window>
);

export default function App() {
  return (
    <Screen>
      <GlobalStyle />
      <DesktopArea>
        <Shortcuts>
          {shortcuts.map(([name, icon]) => (
            <Shortcut key={name}>
              {icon}
              <ShortcutLabel>{name}</ShortcutLabel>
            </Shortcut>
          ))}
        </Shortcuts>
        <Explorer />
      </DesktopArea>

      <Watermark>
        Windows 10 Pro
        <br />
        Build 19041.vb_release.191206-1406
      </Watermark>

      <Taskbar>
        <StartButton aria-label="Start"><WinLogo /></StartButton>
        <TaskSearch>
          <Glass />
          <input type="text" placeholder="Type here to search" />
        </TaskSearch>
        <Apps>
          {Object.entries(appIcons).map(([name, icon], i) => (
            <AppButton key={name} aria-label={name} $active={i === 0}>
              {icon}
              <Underline $active={i === 0} />
            </AppButton>
          ))}
        </Apps>
        <Tray>
          <TrayIcons>
            <svg width="12" height="8"><path d="M.5 7L6 1.500 11.500 7" fill="none" stroke="#fff" strokeWidth="1.300" /></svg>
            <svg width="18" height="16">
              <path d="M5.500 2.500h11v8h-11M11 11v3M7 14.500h8M1.500 1.500h4v4h-4zM3.500 6v7.500h4" fill="none" stroke="#fff" />
            </svg>
            <svg width="17" height="16">
              <path d="M1 5.500h2L7 2v12l-4-3.500H1z" fill="none" stroke="#fff" strokeWidth="1.100" />
              <circle cx="12" cy="11" r="4.500" fill="#cf3348" />
              <path d="M10 9l4 4M14 9l-4 4" stroke="#fff" strokeWidth="1.200" />
            </svg>
          </TrayIcons>
          <Clock>
            12:21 AM
            <br />
            4/14/2024
          </Clock>
          <IconButton aria-label="Notifications">
            <svg width="24" height="24" viewBox="0 0 24 24">
              <path d="M1 1h15v12H8l-3 4v-4H1z" fill="#fff" />
              <path d="M4 4.500h9M4 7.500h9M4 10.500h6" stroke="#222" />
              <circle cx="15.500" cy="15.500" r="8" fill="#303030" stroke="#a5a5a5" />
              <text x="15.500" y="20" fill="#fff" fontSize="12" textAnchor="middle">1</text>
            </svg>
          </IconButton>
          <ShowDesktop aria-label="Show desktop" />
        </Tray>
      </Taskbar>

      <Pointer width="24" height="28" viewBox="0 0 24 28">
        <path d="M1 9l10 10H7l2.500 5-2 1L5 20l-4 4z" fill="#fff" stroke="#111" strokeWidth=".6" />
        <circle cx="14.500" cy="8.500" r="5.700" fill="none" stroke="#1d83dc" strokeWidth="3.600" />
        <path d="M10 5a5.700 5.700 0 0 1 7-1.500" fill="none" stroke="#58b7ef" strokeWidth="3" />
      </Pointer>
    </Screen>
  );
}
